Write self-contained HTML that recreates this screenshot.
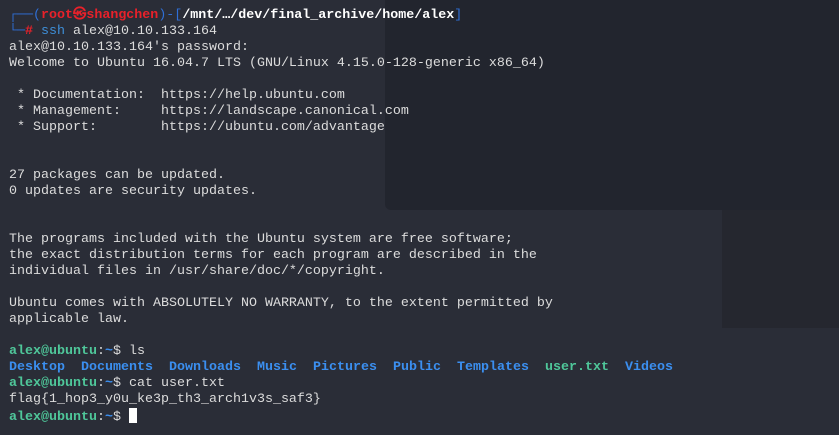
<!DOCTYPE html>
<html><head><style>
html,body{margin:0;padding:0;}
body{width:839px;height:435px;background:#2a2d37;position:relative;overflow:hidden;}
.r1{position:absolute;left:385px;top:0;width:454px;height:210px;background:#22252e;border-bottom-left-radius:6px;}
.r2{position:absolute;left:722px;top:210px;width:117px;height:118px;background:#25272f;}
pre{position:absolute;left:9px;top:8px;margin:0;font-family:"Liberation Mono","DejaVu Sans Mono",monospace;font-size:13.33px;line-height:16px;color:#dcdcdc;}
.b{color:#2f6fd6}.rd{color:#e8212a;font-weight:bold}.w{color:#fff;font-weight:bold}
.s{color:#3e8fd8}.g{color:#4fc79a;font-weight:bold}.d{color:#3b8ff0;font-weight:bold}
.cur{display:inline-block;width:8px;height:15px;background:#fff;vertical-align:-3px;}
</style></head><body>
<div class="r1"></div><div class="r2"></div>
<pre><span class="b">┌──(</span><span class="rd">root㉿shangchen</span><span class="b">)-[</span><span class="w">/mnt/…/dev/final_archive/home/alex</span><span class="b">]</span>
<span class="b">└─</span><span class="rd">#</span> <span class="s">ssh</span> alex@10.10.133.164
alex@10.10.133.164's password: 
Welcome to Ubuntu 16.04.7 LTS (GNU/Linux 4.15.0-128-generic x86_64)

 * Documentation:  https://help.ubuntu.com
 * Management:     https://landscape.canonical.com
 * Support:        https://ubuntu.com/advantage


27 packages can be updated.
0 updates are security updates.


The programs included with the Ubuntu system are free software;
the exact distribution terms for each program are described in the
individual files in /usr/share/doc/*/copyright.

Ubuntu comes with ABSOLUTELY NO WARRANTY, to the extent permitted by
applicable law.

<span class="g">alex@ubuntu</span>:<span class="d">~</span>$ ls
<span class="d">Desktop</span>  <span class="d">Documents</span>  <span class="d">Downloads</span>  <span class="d">Music</span>  <span class="d">Pictures</span>  <span class="d">Public</span>  <span class="d">Templates</span>  <span class="g">user.txt</span>  <span class="d">Videos</span>
<span class="g">alex@ubuntu</span>:<span class="d">~</span>$ cat user.txt
flag{1_hop3_y0u_ke3p_th3_arch1v3s_saf3}
<span class="g">alex@ubuntu</span>:<span class="d">~</span>$ <span class="cur"></span></pre>
</body></html>
